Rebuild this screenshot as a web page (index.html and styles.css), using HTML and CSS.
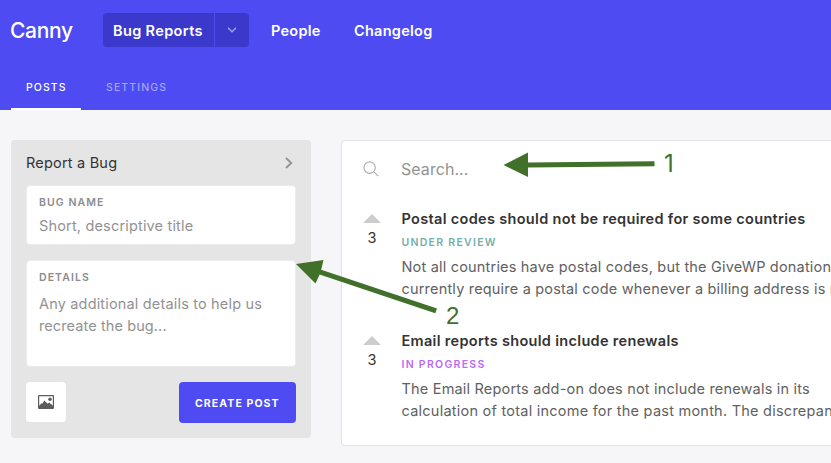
FILE: index.html
```html
<!DOCTYPE html>
<html lang="en">
<head>
<meta charset="utf-8">
<title>Bug Reports</title>
<link rel="stylesheet" href="styles.css">
</head>
<body>
<header class="header">
  <div class="topbar">
    <span class="logo">Canny</span>
    <div class="board">
      <span class="board-name">Bug Reports</span>
      <span class="board-toggle"><svg width="10" height="6" viewBox="0 0 10 6"><path d="M1 .8 5 4.8 9 .8" fill="none" stroke="#a3a2f2" stroke-width="1.3"/></svg></span>
    </div>
    <span class="nav people">People</span>
    <span class="nav changelog">Changelog</span>
  </div>
  <nav class="tabs">
    <span class="tab active">POSTS</span>
    <span class="tab">SETTINGS</span>
  </nav>
</header>
<main class="main">
  <section class="form">
    <div class="form-head">
      <span class="form-title">Report a Bug</span>
      <svg width="8" height="12" viewBox="0 0 8 12"><path d="M1 1 6.3 6 1 11" fill="none" stroke="#929292" stroke-width="1.8"/></svg>
    </div>
    <div class="field name-field">
      <div class="label bug-label">BUG NAME</div>
      <div class="placeholder">Short, descriptive title</div>
    </div>
    <div class="field details-field">
      <div class="label details-label">DETAILS</div>
      <div class="placeholder multi">Any additional details to help us<br><span class="ph-rec">recreate the bug...</span></div>
    </div>
    <div class="actions">
      <div class="image-button"><svg width="16" height="14" viewBox="0 0 16 14"><rect x=".6" y=".6" width="14.8" height="12.8" rx=".5" fill="none" stroke="#5c5c5c" stroke-width="1.2"/><path d="M1 11 3.4 8.2 4.3 8.7 6.3 5.4 9.6 8.7 11.2 7.5 15 10.8V13.5H1Z" fill="#5c5c5c"/><circle cx="12" cy="4.2" r="1.7" fill="#5c5c5c"/></svg></div>
      <div class="create">CREATE POST</div>
    </div>
  </section>
  <section class="list">
    <div class="search">
      <svg width="16" height="16" viewBox="0 0 16 16"><g fill="none" stroke="#b0b0b0" stroke-width="1.2"><circle cx="6.6" cy="6.6" r="5.7"/><path d="M10.8 10.8 15.2 15.2"/></g></svg>
      <span class="search-text">Search...</span>
    </div>
    <article class="post">
      <div class="vote"><svg width="18" height="9" viewBox="0 0 18 9"><path d="M0 9 9 0 18 9Z" fill="#cdcdcd"/></svg><span>3</span></div>
      <div class="body">
        <div class="title">Postal codes should not be required for some countries</div>
        <div class="status review">UNDER REVIEW</div>
        <div class="desc">Not all countries have postal codes, but the GiveWP donation<br>currently require a postal code whenever a billing address is re</div>
      </div>
    </article>
    <article class="post">
      <div class="vote"><svg width="18" height="9" viewBox="0 0 18 9"><path d="M0 9 9 0 18 9Z" fill="#cdcdcd"/></svg><span>3</span></div>
      <div class="body">
        <div class="title">Email reports should include renewals</div>
        <div class="status progress">IN PROGRESS</div>
        <div class="desc">The Email Reports add-on does not include renewals in its<br><span class="wide">calculation of total income for the past month. The discrepancy</span></div>
      </div>
    </article>
  </section>
</main>
<svg class="notes" width="831" height="463" viewBox="0 0 831 463">
  <g fill="#41702a">
    <path d="M503.5 165 528 152.5V162.4L654.5 161.3V166.3L528 167.5V177Z"/>
    <path d="M296 264 323.5 260 321.2 269.7 437 308.5 435.3 313.3 319.6 274.5 315.5 283.5Z"/>
    <text class="note-one" x="664" y="172">1</text>
    <text class="note-two" x="446" y="324">2</text>
  </g>
</svg>
</body>
</html>
```
FILE: styles.css
```css
* { box-sizing: border-box; }
body {
  margin: 0;
  height: 463px;
  overflow: hidden;
  background: #f6f6f9;
  font-family: Inter, "Liberation Sans", sans-serif;
  color: #333;
  white-space: nowrap;
}
svg { display: block; flex: none; }
.header { height: 110px; background: #4d4bf1; color: #fff; }
.topbar { display: flex; align-items: center; height: 60px; padding-left: 10px; }
.logo { width: 93px; padding-top: 1px; font-size: 21px; font-weight: 500; line-height: 24px; letter-spacing: -0.3px; }
.board {
  display: flex;
  width: 146px;
  height: 34px;
  border-radius: 4px;
  background: #3b39cc;
  overflow: hidden;
}
.board-name {
  width: 112px;
  padding-left: 10px;
  border-right: 1px solid #4d4bf1;
  font-size: 14.5px;
  font-weight: 600;
  line-height: 35px;
  letter-spacing: 0.36px;
}
.board-toggle { display: flex; flex: 1; align-items: center; justify-content: center; }
.nav { padding-top: 1px; font-size: 14.5px; font-weight: 600; letter-spacing: 0.27px; }
.people { width: 83px; margin-left: 22px; }
.tabs { display: flex; height: 50px; padding-left: 11px; font-size: 10.5px; font-weight: 500; line-height: 55px; letter-spacing: 1.1px; }
.tab { height: 50px; color: #a6a5f8; }
.tab.active { width: 70px; margin-right: 25px; padding-left: 15px; border-bottom: 2px solid #fff; color: #fff; }
.main { display: flex; align-items: flex-start; gap: 30px; padding: 30px 0 0 11px; }
.form { flex: none; width: 300px; height: 298px; padding: 0 15px; border-radius: 4px; background: #e5e5e5; }
.form-head { display: flex; align-items: center; justify-content: space-between; height: 45px; padding-right: 3px; }
.form-title { font-size: 14.5px; letter-spacing: 0.2px; }
.field { padding-left: 12px; border: 1px solid #ececec; border-radius: 4px; background: #fff; }
.name-field { height: 60px; margin-bottom: 15px; }
.details-field { height: 107px; margin-bottom: 15px; }
.label { padding-top: 9px; font-size: 10.5px; font-weight: 600; line-height: 15px; letter-spacing: 1.08px; color: #8c8c8c; }
.placeholder { padding-top: 5px; font-size: 14.5px; line-height: 22px; letter-spacing: 0.17px; color: #929292; }
.multi { padding-top: 8px; }
.ph-rec { letter-spacing: 0.1px; }
.actions { display: flex; justify-content: space-between; }
.image-button { display: flex; align-items: center; justify-content: center; width: 40px; height: 40px; border-radius: 4px; background: #fff; }
.create { width: 117px; height: 41px; border-radius: 4px; background: #4d4bf1; color: #fff; font-size: 10.5px; font-weight: 700; line-height: 43px; letter-spacing: 1.1px; padding-left: 16px; }
.list { flex: 1; min-width: 0; height: 306px; border: 1px solid #e3e3e6; border-right: 0; border-radius: 4px 0 0 4px; background: #fff; overflow: hidden; }
.search { display: flex; align-items: center; height: 56px; padding-left: 21px; }
.search-text { margin-left: 22px; font-size: 16px; color: #929292; letter-spacing: 0.05px; }
.post { display: flex; height: 122px; padding: 11px 0 0 21px; }
.vote { display: flex; flex-direction: column; align-items: center; width: 18px; margin-right: 20.5px; padding-top: 6px; font-size: 14.5px; line-height: 21px; }
.vote span { padding-top: 4px; }
.title { font-size: 14.5px; font-weight: 600; line-height: 22px; letter-spacing: 0.32px; }
.status { padding-top: 5px; font-size: 10.5px; font-weight: 600; line-height: 15px; letter-spacing: 1.28px; }
.review { color: #72afab; }
.progress { color: #bb6cf5; }
.desc { padding-top: 6px; font-size: 14.5px; line-height: 22px; letter-spacing: 0.19px; color: #616161; }
.wide { letter-spacing: 0.24px; }
.notes { position: absolute; top: 0; left: 0; }
.note-one { font-family: Inter, sans-serif; font-size: 24px; }
.note-two { font-family: "Liberation Sans", Arial, sans-serif; font-size: 24px; }
```
